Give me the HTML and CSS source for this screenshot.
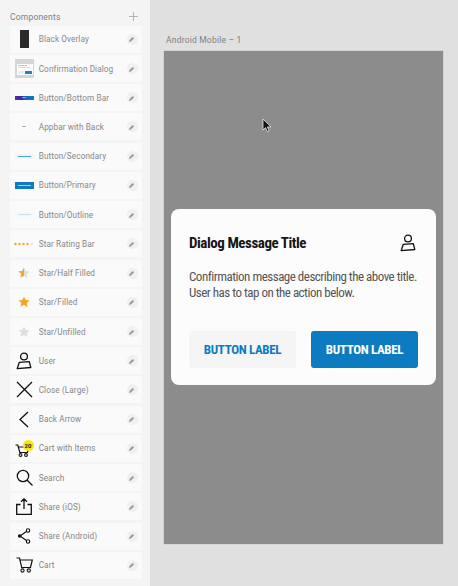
FILE: index.html
```html
<!DOCTYPE html>
<html>
<head>
  <title>Components</title>
  <link rel="stylesheet" href="styles.css">
</head>
<body>
  <svg class="defs" width="0" height="0">
    <symbol id="pencil" viewBox="0 0 8 8"><path d="M2 6L5.500 2.500" stroke="#9a9a9a" stroke-width="2" fill="none"/><path d="M1 7l.4-1.600 1.200 1.200z" fill="#9a9a9a"/><path d="M4.400 1.800L6.200 3.600" stroke="#f0f0f0" stroke-width=".5"/></symbol>
    <symbol id="user" viewBox="0 0 16 18"><circle cx="8" cy="4.500" r="3.400" fill="none" stroke="#111" stroke-width="1.300"/><path d="M3.300 10.300l10-.6 1.500 5.800-13.600 1.200z" fill="none" stroke="#111" stroke-width="1.300" stroke-linejoin="round"/></symbol>
  </svg>

  <div class="sidebar">
    <div class="side-head">
      <span>Components</span>
      <svg width="11" height="11" viewBox="0 0 11 11"><path d="M5.500 1v9M1 5.500h9" stroke="#b4b4b4" stroke-width="1" fill="none"/></svg>
    </div>
    <div class="row">
      <div class="thumb"><div class="overlay-thumb"></div></div>
      <span class="name">Black Overlay</span>
      <span class="edit"><svg width="8" height="8"><use href="#pencil"/></svg></span>
    </div>
    <div class="row">
      <div class="thumb">
        <div class="dialog-thumb">
          <div class="dt-card">
            <i class="dt-line"></i>
            <i class="dt-line short"></i>
            <div class="dt-btns"><i class="dt-btn light"></i><i class="dt-btn"></i></div>
          </div>
        </div>
      </div>
      <span class="name">Confirmation Dialog</span>
      <span class="edit"><svg width="8" height="8"><use href="#pencil"/></svg></span>
    </div>
    <div class="row">
      <div class="thumb"><div class="bar-thumb"><i></i></div></div>
      <span class="name">Button/Bottom Bar</span>
      <span class="edit"><svg width="8" height="8"><use href="#pencil"/></svg></span>
    </div>
    <div class="row">
      <div class="thumb"><div class="dash-thumb"></div></div>
      <span class="name">Appbar with Back</span>
      <span class="edit"><svg width="8" height="8"><use href="#pencil"/></svg></span>
    </div>
    <div class="row">
      <div class="thumb"><div class="btn-thumb secondary"><i></i></div></div>
      <span class="name">Button/Secondary</span>
      <span class="edit"><svg width="8" height="8"><use href="#pencil"/></svg></span>
    </div>
    <div class="row">
      <div class="thumb"><div class="btn-thumb primary"><i></i></div></div>
      <span class="name">Button/Primary</span>
      <span class="edit"><svg width="8" height="8"><use href="#pencil"/></svg></span>
    </div>
    <div class="row">
      <div class="thumb"><div class="btn-thumb outline"><i></i></div></div>
      <span class="name">Button/Outline</span>
      <span class="edit"><svg width="8" height="8"><use href="#pencil"/></svg></span>
    </div>
    <div class="row">
      <div class="thumb">
        <svg width="20" height="4" viewBox="0 0 20 4"><g fill="#f5a623"><circle cx="1.500" cy="2" r="1.200"/><circle cx="5.500" cy="2" r="1.200"/><circle cx="9.500" cy="2" r="1.200"/><circle cx="13.500" cy="2" r="1.200"/></g><circle cx="18" cy="2" r="1.100" fill="#ddd"/></svg>
      </div>
      <span class="name">Star Rating Bar</span>
      <span class="edit"><svg width="8" height="8"><use href="#pencil"/></svg></span>
    </div>
    <div class="row">
      <div class="thumb">
        <svg width="12" height="12" viewBox="0 0 12 12"><path d="M6 .5l1.700 3.600 3.900.5-2.900 2.700.8 3.900L6 8.800l-3.500 1.900.8-3.900L.4 4.600l3.900-.5z" fill="#dedede"/><path d="M6 .5v8.300L2.500 10.700l.8-3.900L.4 4.600l3.900-.5z" fill="#f5a623"/></svg>
      </div>
      <span class="name">Star/Half Filled</span>
      <span class="edit"><svg width="8" height="8"><use href="#pencil"/></svg></span>
    </div>
    <div class="row">
      <div class="thumb">
        <svg width="12" height="12" viewBox="0 0 12 12"><path d="M6 .5l1.700 3.600 3.900.5-2.900 2.700.8 3.900L6 8.800l-3.500 1.900.8-3.900L.4 4.600l3.900-.5z" fill="#f5a623"/></svg>
      </div>
      <span class="name">Star/Filled</span>
      <span class="edit"><svg width="8" height="8"><use href="#pencil"/></svg></span>
    </div>
    <div class="row">
      <div class="thumb">
        <svg width="12" height="12" viewBox="0 0 12 12"><path d="M6 .5l1.700 3.600 3.900.5-2.900 2.700.8 3.900L6 8.800l-3.500 1.900.8-3.900L.4 4.600l3.900-.5z" fill="#dedede"/></svg>
      </div>
      <span class="name">Star/Unfilled</span>
      <span class="edit"><svg width="8" height="8"><use href="#pencil"/></svg></span>
    </div>
    <div class="row">
      <div class="thumb"><svg width="16" height="18"><use href="#user"/></svg></div>
      <span class="name">User</span>
      <span class="edit"><svg width="8" height="8"><use href="#pencil"/></svg></span>
    </div>
    <div class="row">
      <div class="thumb">
        <svg width="17" height="17" viewBox="0 0 17 17"><path d="M1 1l15 15M16 1L1 16" stroke="#111" stroke-width="1.300" fill="none"/></svg>
      </div>
      <span class="name">Close (Large)</span>
      <span class="edit"><svg width="8" height="8"><use href="#pencil"/></svg></span>
    </div>
    <div class="row">
      <div class="thumb">
        <svg width="12" height="17" viewBox="0 0 12 17"><path d="M10 1L2 8.500l8 7.500" stroke="#111" stroke-width="1.300" fill="none"/></svg>
      </div>
      <span class="name">Back Arrow</span>
      <span class="edit"><svg width="8" height="8"><use href="#pencil"/></svg></span>
    </div>
    <div class="row">
      <div class="thumb">
        <svg class="cart-small" width="15" height="13" viewBox="0 0 15 13"><path d="M.5 1h2.300l2 7.500h7.700l1.300-5.500H3.300" fill="none" stroke="#111" stroke-width="1.200"/><circle cx="5.500" cy="11" r="1.400" fill="none" stroke="#111" stroke-width="1.100"/><circle cx="11" cy="11" r="1.400" fill="none" stroke="#111" stroke-width="1.100"/></svg>
        <span class="cart-badge">20</span>
      </div>
      <span class="name">Cart with Items</span>
      <span class="edit"><svg width="8" height="8"><use href="#pencil"/></svg></span>
    </div>
    <div class="row">
      <div class="thumb">
        <svg width="17" height="17" viewBox="0 0 17 17"><circle cx="7" cy="7" r="5.700" fill="none" stroke="#111" stroke-width="1.300"/><path d="M11 11l5.500 5.500" stroke="#111" stroke-width="1.300"/></svg>
      </div>
      <span class="name">Search</span>
      <span class="edit"><svg width="8" height="8"><use href="#pencil"/></svg></span>
    </div>
    <div class="row">
      <div class="thumb">
        <svg width="16" height="17" viewBox="0 0 16 17"><path d="M4.500 6.500H.7v9.800h14.600V6.500h-3.800M8 11V1M5 3.800L8 .9l3 2.900" fill="none" stroke="#111" stroke-width="1.300"/></svg>
      </div>
      <span class="name">Share (iOS)</span>
      <span class="edit"><svg width="8" height="8"><use href="#pencil"/></svg></span>
    </div>
    <div class="row">
      <div class="thumb">
        <svg width="14" height="16" viewBox="0 0 14 16"><path d="M3 8l7.500-5.200M3 8l7.500 5.200" stroke="#111" stroke-width="1.200"/><circle cx="2.600" cy="8" r="1.700" fill="#111"/><circle cx="11" cy="2.500" r="1.700" fill="#fff" stroke="#111" stroke-width="1.100"/><circle cx="11" cy="13.500" r="1.700" fill="#fff" stroke="#111" stroke-width="1.100"/></svg>
      </div>
      <span class="name">Share (Android)</span>
      <span class="edit"><svg width="8" height="8"><use href="#pencil"/></svg></span>
    </div>
    <div class="row">
      <div class="thumb">
        <svg width="17" height="16" viewBox="0 0 17 16"><path d="M.5 1h3l2.200 9.500h8.800l1.800-7.500H4" fill="none" stroke="#111" stroke-width="1.200"/><circle cx="6.500" cy="13.500" r="1.600" fill="none" stroke="#111" stroke-width="1.100"/><circle cx="12.800" cy="13.500" r="1.600" fill="none" stroke="#111" stroke-width="1.100"/></svg>
      </div>
      <span class="name">Cart</span>
      <span class="edit"><svg width="8" height="8"><use href="#pencil"/></svg></span>
    </div>
  </div>

  <div class="canvas">
    <div class="frame-title">Android Mobile – 1</div>
    <div class="frame">
      <div class="dialog">
        <div class="dialog-head">
          <strong>Dialog Message Title</strong>
          <svg width="16" height="18"><use href="#user"/></svg>
        </div>
        <p class="dialog-text">Confirmation message describing the above title.<br>User has to tap on the action below.</p>
        <div class="dialog-actions">
          <button class="btn btn-light">BUTTON LABEL</button>
          <button class="btn btn-blue">BUTTON LABEL</button>
        </div>
      </div>
    </div>
    <svg class="cursor" width="10" height="15" viewBox="0 0 10 15"><path d="M1 1v11l2.600-2.400 1.700 4 1.800-.8-1.700-3.900H9z" fill="#111" stroke="#fff" stroke-width=".7"/></svg>
  </div>
</body>
</html>
```

FILE: styles.css
```css
html, body {
  height: 100%;
}
body {
  margin: 0;
  display: flex;
  overflow: hidden;
  background-color: #e0e0e0;
  font-family: Roboto, sans-serif;
}
.defs {
  position: absolute;
}
.sidebar {
  width: 150px;
  height: 586px;
  flex-shrink: 0;
  box-sizing: border-box;
  padding: 9.6px 8px 0 10px;
  background-color: #f4f4f4;
  overflow: hidden;
  display: flex;
  flex-direction: column;
  gap: 2.22px;
}
.side-head {
  flex: 0 0 14px;
  display: flex;
  justify-content: space-between;
  align-items: center;
  padding-right: 3px;
  font-size: 8.5px;
  letter-spacing: 0.2px;
  color: #808080;
}
.row {
  flex: 0 0 27px;
  display: flex;
  align-items: center;
  background-color: #fafafa;
}
.thumb {
  position: relative;
  width: 28px;
  flex-shrink: 0;
  display: flex;
  justify-content: center;
  align-items: center;
}
.name {
  flex: 1;
  margin-left: 0.7px;
  font-size: 8.2px;
  letter-spacing: 0.1px;
  color: #878787;
  white-space: nowrap;
}
.edit {
  width: 11px;
  height: 11px;
  margin-right: 4.5px;
  border-radius: 50%;
  background-color: #f0f0f0;
  display: flex;
  justify-content: center;
  align-items: center;
}
.overlay-thumb {
  width: 9px;
  height: 18px;
  background-color: #2b2b2b;
}
.dialog-thumb {
  width: 19px;
  height: 19px;
  box-sizing: border-box;
  padding: 5px 1px 3px 2px;
  background-color: #d6d6d6;
}
.dt-card {
  height: 100%;
  box-sizing: border-box;
  padding: 1px;
  background-color: #fff;
  display: flex;
  flex-direction: column;
  gap: 1px;
}
.dt-line {
  display: block;
  width: 9px;
  height: 1px;
  background-color: #c9c4b4;
}
.dt-line.short {
  width: 12px;
  background-color: #dcdcdc;
}
.dt-btns {
  margin-top: auto;
  display: flex;
  gap: 1px;
}
.dt-btn {
  display: block;
  flex: 1;
  height: 3px;
  background-color: #1b82c4;
}
.dt-btn.light {
  background-color: #ececec;
}
.bar-thumb {
  width: 19px;
  height: 4px;
  background: linear-gradient(to right, #4a2fa8 0, #3a2aa0 40%, #1c62b4 41%, #0f78be 100%);
  display: flex;
  justify-content: center;
  align-items: center;
}
.bar-thumb i {
  display: block;
  width: 4px;
  height: 1px;
  background-color: #7f9fd8;
}
.dash-thumb {
  width: 4px;
  height: 1px;
  background-color: #aaa;
}
.btn-thumb {
  width: 19px;
  display: flex;
  justify-content: center;
  align-items: center;
}
.btn-thumb i {
  display: block;
  width: 13px;
  height: 1px;
}
.btn-thumb.secondary {
  height: 5px;
  background-color: #f1f5f7;
}
.btn-thumb.secondary i {
  background-color: #4fa3d6;
}
.btn-thumb.primary {
  height: 7px;
  background-color: #0c7bbf;
}
.btn-thumb.primary i {
  background-color: #a6d2ec;
}
.btn-thumb.outline {
  height: 5px;
  background-color: #f5f8fa;
}
.btn-thumb.outline i {
  background-color: #c6dfee;
}
.cart-small {
  margin: 4px 0 0 -4px;
}
.cart-badge {
  position: absolute;
  top: 0;
  left: 12.5px;
  width: 11px;
  height: 11px;
  border-radius: 50%;
  background-color: #f5e616;
  color: #222;
  font-size: 6px;
  font-weight: bold;
  line-height: 11px;
  text-align: center;
}
.canvas {
  position: relative;
  flex: 1;
  padding: 33px 15px 0 14px;
}
.frame-title {
  height: 18px;
  padding-left: 2px;
  font-size: 8.5px;
  letter-spacing: 0.2px;
  line-height: 14px;
  color: #808080;
}
.frame {
  height: 493px;
  box-sizing: border-box;
  padding: 0 7px 1px;
  background-color: #8c8c8c;
  box-shadow: 0 0 1px rgba(0,0,0,0.3);
  display: flex;
  align-items: center;
}
.dialog {
  flex: 1;
  height: 176px;
  box-sizing: border-box;
  padding: 24px 18px 0 18px;
  background-color: #fcfcfc;
  border-radius: 8px;
  font-family: "Roboto Condensed", "Liberation Sans Narrow", Roboto, sans-serif;
  font-stretch: 75%;
}
.dialog-head {
  height: 20px;
  display: flex;
  justify-content: space-between;
  align-items: center;
  padding-right: 2px;
}
.dialog-head strong {
  font-size: 15px;
  letter-spacing: -0.45px;
  color: #161616;
}
.dialog-text {
  margin: 16px 0 0 0;
  font-size: 13px;
  letter-spacing: -0.5px;
  line-height: 16px;
  white-space: nowrap;
  color: #555;
}
.dialog-actions {
  margin-top: 30px;
  display: flex;
  gap: 15px;
}
.btn {
  flex: 1;
  height: 37px;
  border: none;
  border-radius: 3px;
  padding: 0;
  font-family: inherit;
  font-stretch: inherit;
  font-size: 13px;
  font-weight: bold;
  letter-spacing: -0.35px;
}
.btn-light {
  background-color: #f5f5f5;
  color: #0c7bbf;
}
.btn-blue {
  background-color: #0c7bbf;
  color: #fff;
}
.cursor {
  position: absolute;
  top: 118px;
  left: 112px;
}
```
